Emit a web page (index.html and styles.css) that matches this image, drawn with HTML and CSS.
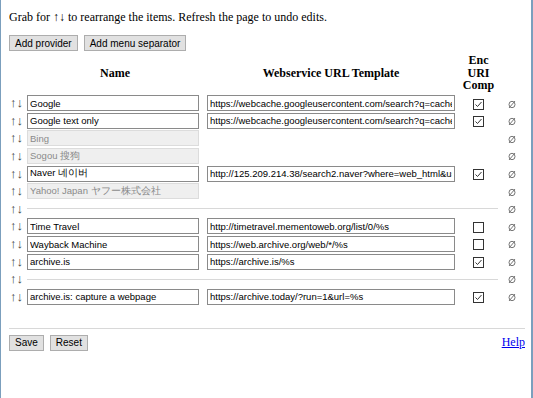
FILE: index.html
```html
<!DOCTYPE html>
<html lang="en">

<head>
    <meta charset="UTF-8">
    <title>Providers</title>
    <link rel="stylesheet" href="styles.css">
</head>

<body>

    <!-- 안내 문구 -->
    <p class="intro">Grab for ↑↓ to rearrange the items. Refresh the page to undo edits.</p>

    <div class="actions">
        <button class="btn">Add provider</button>
        <button class="btn">Add menu separator</button>
    </div>

    <!-- 목록 -->
    <table class="providers">
        <colgroup>
            <col class="c_grab">
            <col class="c_name">
            <col class="c_url">
            <col class="c_enc">
            <col class="c_del">
        </colgroup>
        <thead>
            <tr>
                <th></th>
                <th>Name</th>
                <th>Webservice URL Template</th>
                <th>Enc<br>URI<br>Comp</th>
                <th></th>
            </tr>
        </thead>
        <tbody id="rows"></tbody>
    </table>

    <hr class="bottom_line">

    <div class="footer">
        <div>
            <button class="btn">Save</button>
            <button class="btn">Reset</button>
        </div>
        <a href="#" class="help">Help</a>
    </div>

    <script>
        let items = [
            { name: "Google", url: "https://webcache.googleusercontent.com/search?q=cache:%s", enc: true },
            { name: "Google text only", url: "https://webcache.googleusercontent.com/search?q=cache:%s&strip=1", enc: true },
            { name: "Bing", off: true },
            { name: "Sogou 搜狗", off: true },
            { name: "Naver 네이버", url: "http://125.209.214.38/search2.naver?where=web_html&u=%s", enc: true },
            { name: "Yahoo! Japan ヤフー株式会社", off: true },
            { sep: true },
            { name: "Time Travel", url: "http://timetravel.mementoweb.org/list/0/%s", enc: false },
            { name: "Wayback Machine", url: "https://web.archive.org/web/*/%s", enc: false },
            { name: "archive.is", url: "https://archive.is/%s", enc: true },
            { sep: true },
            { name: "archive.is: capture a webpage", url: "https://archive.today/?run=1&url=%s", enc: true }
        ];

        let checkOn = '<svg width="11" height="11" viewBox="0 0 11 11"><rect x="0.5" y="0.5" width="10" height="10" fill="#fff" stroke="#333"/><path d="M2.5 5.5 L4.5 7.5 L8.5 3" fill="none" stroke="#333" stroke-width="1"/></svg>';
        let checkOff = '<svg width="11" height="11" viewBox="0 0 11 11"><rect x="0.5" y="0.5" width="10" height="10" fill="#fff" stroke="#333"/></svg>';
        let noIcon = '<svg width="8" height="9" viewBox="0 0 8 9"><ellipse cx="4" cy="4.5" rx="3" ry="3.2" fill="none" stroke="#666" stroke-width="0.9"/><path d="M1 8 L7 1" stroke="#666" stroke-width="0.9"/></svg>';

        let str = "";
        items.forEach(function (item) {
            str += "<tr>";
            str += "<td class='grab'>↑↓</td>";
            if (item.sep) {
                str += "<td colspan='3'><div class='sep'></div></td>";
            } else {
                if (item.off) {
                    str += "<td class='name'><input type='text' value='" + item.name + "' disabled></td><td></td><td></td>";
                } else {
                    str += "<td class='name'><input type='text' value='" + item.name + "'></td>";
                    str += "<td class='url'><input type='text' value='" + item.url + "'></td>";
                    str += "<td class='enc'>" + (item.enc ? checkOn : checkOff) + "</td>";
                }
            }
            str += "<td class='del'>" + noIcon + "</td>";
            str += "</tr>";
        });
        document.getElementById("rows").innerHTML = str;
    </script>

</body>

</html>
```

FILE: styles.css
```css
html {
    min-height: 100%;
    box-sizing: border-box;
    border-left: 1px solid #7b9fbd;
    border-right: 2px solid #7b9fbd;
    background: #fff;
}

body {
    margin: 8px 6px 8px 8px;
    font-family: "Liberation Serif", serif;
    font-size: 12px;
    color: #000;
}

.intro {
    margin: 2px 0 0 0;
    font-size: 12px;
}

.actions {
    margin-top: 10px;
    display: flex;
    gap: 6px;
}

.btn {
    font-family: "Liberation Sans", sans-serif;
    font-size: 10px;
    height: 16px;
    padding: 0 5px;
    background: #e1e1e1;
    border: 1px solid #adadad;
    border-radius: 0;
    color: #000;
}

.providers {
    margin-top: 3px;
    width: 516px;
    table-layout: fixed;
    border-collapse: separate;
    border-spacing: 0;
}

.c_grab { width: 18px; }
.c_name { width: 176px; }
.c_url { width: 256px; }
.c_enc { width: 39px; }
.c_del { width: 27px; }

.providers th {
    font-weight: bold;
    font-size: 12px;
    line-height: 12.5px;
    padding: 0 0 3px 0;
    vertical-align: middle;
}

.providers td {
    padding: 0.8px 0;
    height: 16px;
}

.grab {
    font-family: "Liberation Sans", "DejaVu Sans", sans-serif;
    font-size: 13px;
    line-height: 16px;
    color: #444;
    padding-left: 1px !important;
    white-space: nowrap;
}

.providers input {
    display: block;
    box-sizing: border-box;
    height: 16px;
    padding: 0 2px;
    border: 1px solid #8a8a8a;
    font-family: "Liberation Sans", sans-serif;
    font-size: 9.5px;
    color: #000;
    background: #fff;
    outline: none;
    margin: 0;
}

.name input {
    width: 172px;
}

.url {
    padding-left: 4px !important;
}

.url input {
    width: 248px;
}

.providers input:disabled {
    background: #efefef;
    border-color: #dcdcdc;
    color: #8a8a8a;
}

.enc,
.del {
    text-align: center;
}

.enc svg,
.del svg {
    display: inline-block;
    vertical-align: middle;
}

.sep {
    border-top: 1px solid #d8d8d8;
}

.bottom_line {
    margin: 22px 0 6px 0;
    border: none;
    border-top: 1px solid #d8d8d8;
}

.footer {
    display: flex;
    justify-content: space-between;
    align-items: center;
}

.footer .btn {
    margin-right: 3px;
}

.help {
    color: #0000ee;
    font-size: 12px;
}
```
